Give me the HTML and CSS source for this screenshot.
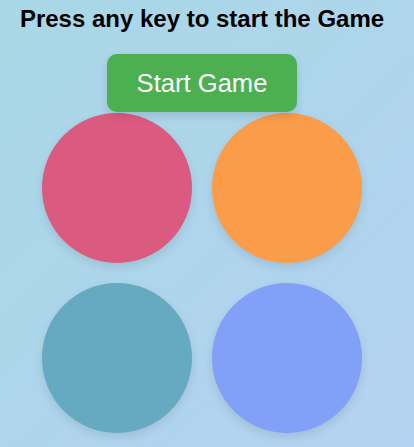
FILE: index.html
```html
<!DOCTYPE html>
<html lang="en">
<head>
<meta charset="utf-8">
<title>Simon Game</title>
<link rel="stylesheet" href="styles.css">
</head>
<body>
<div class="page">
  <h1 class="title">Press any key to start the Game</h1>
  <button class="start-btn" type="button">Start Game</button>
  <div class="board">
    <div class="pad pad-red"></div>
    <div class="pad pad-orange"></div>
    <div class="pad pad-teal"></div>
    <div class="pad pad-blue"></div>
  </div>
</div>
</body>
</html>
```
FILE: styles.css
```css
html, body {
  margin: 0;
  padding: 0;
}
body {
  min-height: 447px;
  background: linear-gradient(135deg, #a8d8e6 0%, #b4d2f1 100%);
  font-family: "Liberation Sans", Arial, sans-serif;
  overflow: hidden;
}
.page {
  width: 404px;
  display: flex;
  flex-direction: column;
  align-items: center;
}
.title {
  margin: 5px 0 0;
  font-size: 24px;
  font-weight: bold;
  color: #000;
  line-height: 27.6px;
}
.start-btn {
  margin-top: 21px;
  background: #4caf50;
  color: #fff;
  border: none;
  border-radius: 10px;
  font-family: "Liberation Sans", Arial, sans-serif;
  font-size: 25.6px;
  padding: 14px 30px;
  line-height: 30px;
  box-shadow: 0 4px 8px rgba(0, 0, 0, 0.12);
  position: relative;
  z-index: 1;
}
.board {
  margin-top: 1px;
  display: grid;
  grid-template-columns: 150px 150px;
  gap: 20px;
}
.pad {
  width: 150px;
  height: 150px;
  border-radius: 50%;
  box-shadow: 0 4px 10px rgba(0, 0, 0, 0.1);
}
.pad-red { background: #db5a80; }
.pad-orange { background: #fa9c4a; }
.pad-teal { background: #65aac1; }
.pad-blue { background: #82a0f8; }
```
